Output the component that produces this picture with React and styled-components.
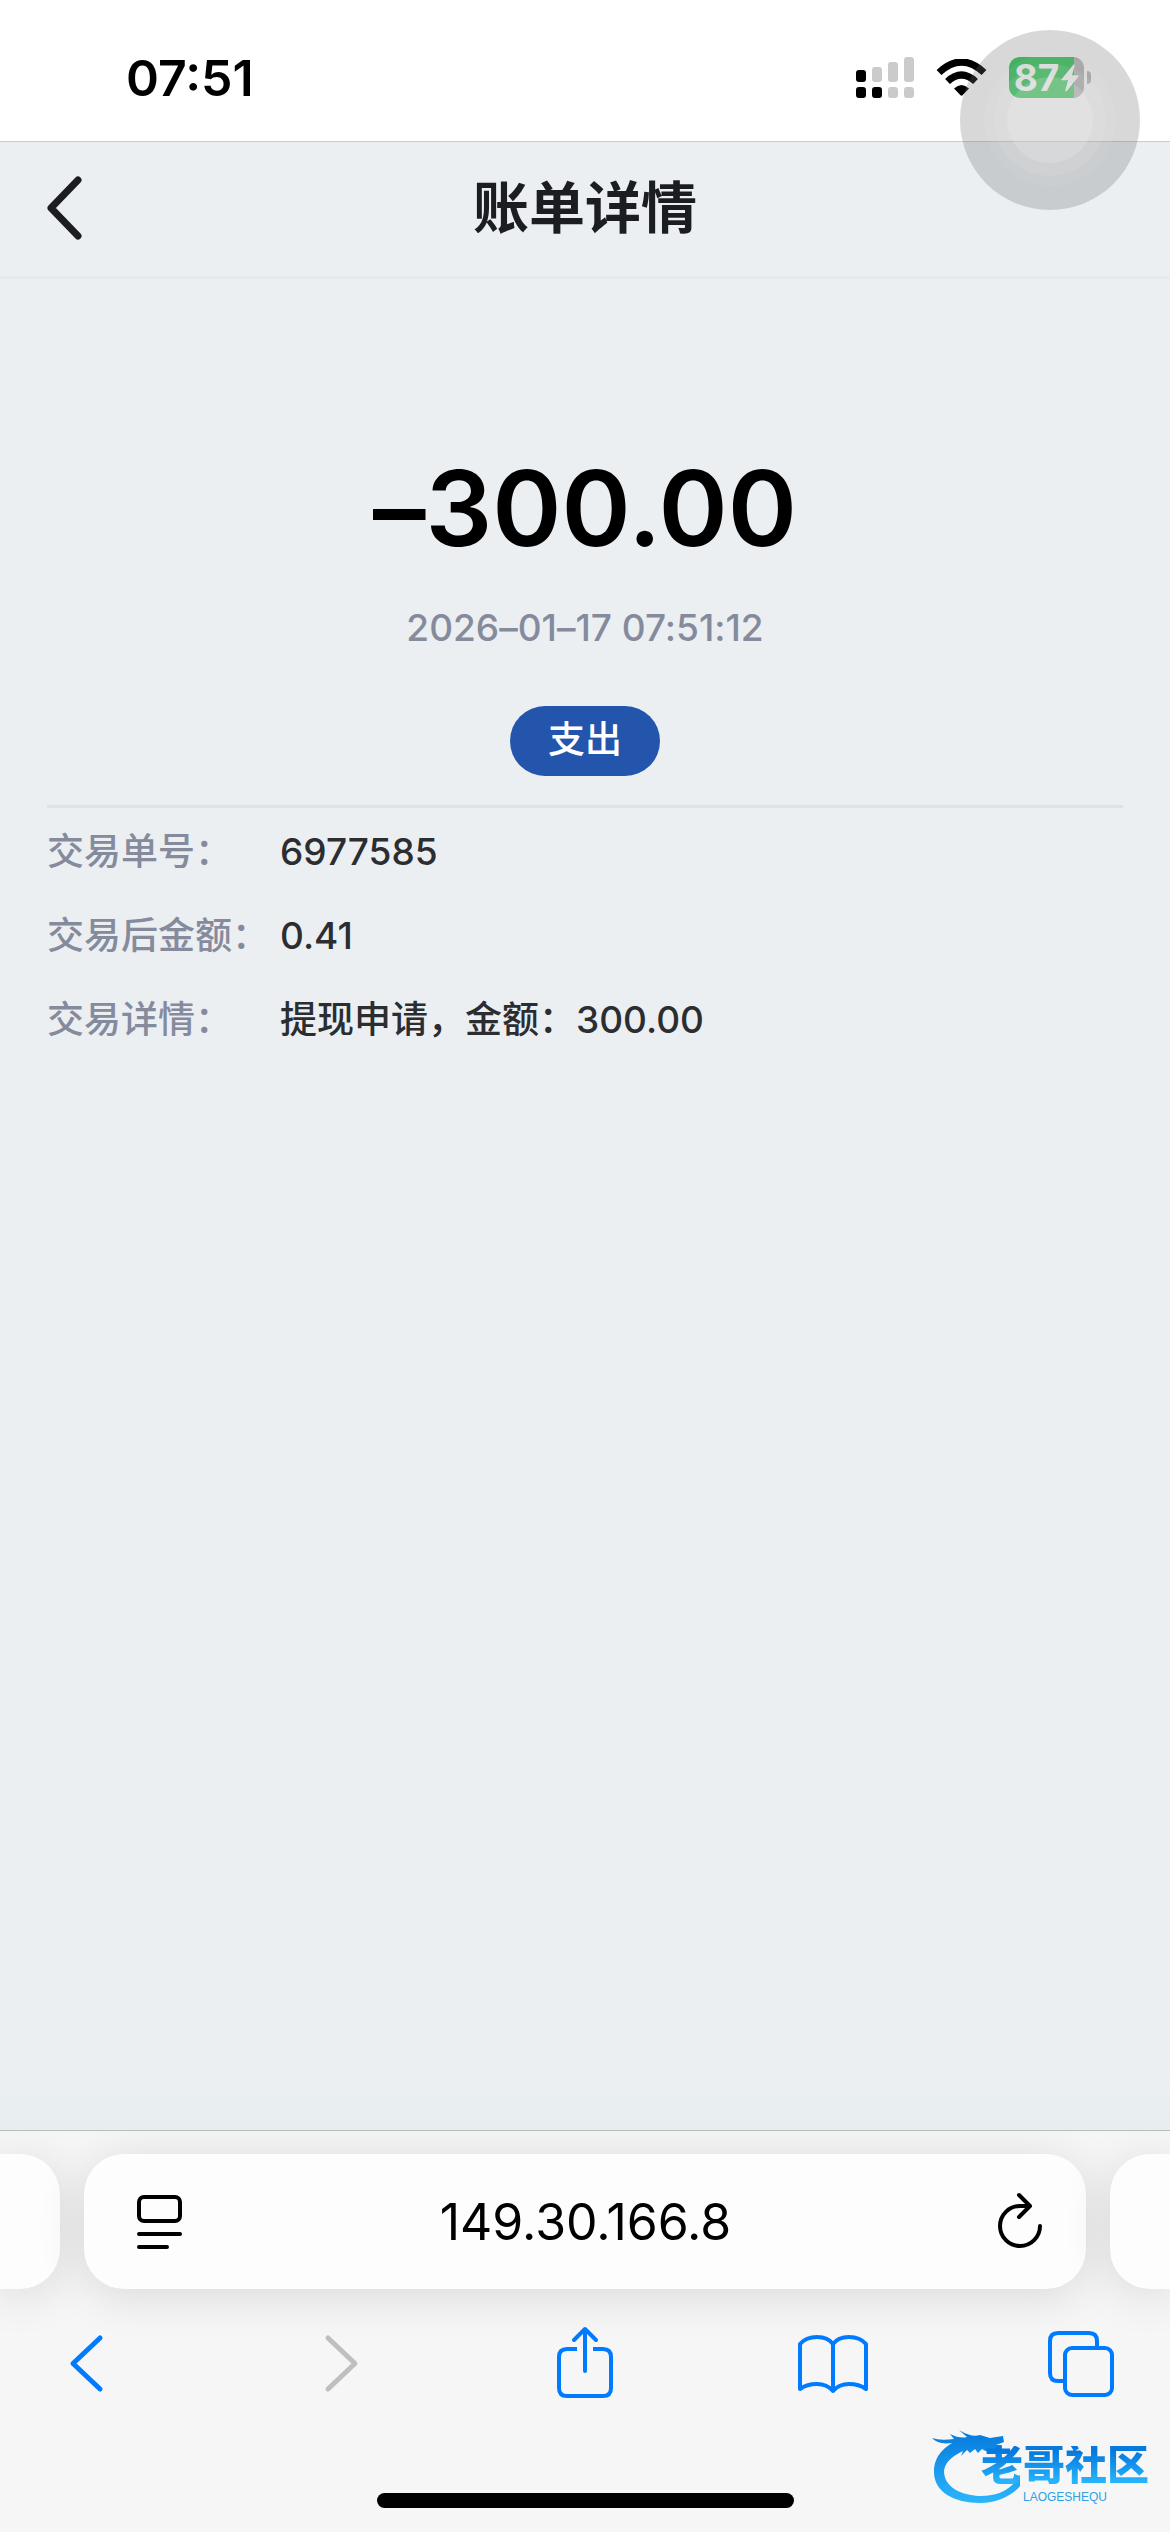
import React from "react";
import styled, { createGlobalStyle } from "styled-components";

const GlobalStyle = createGlobalStyle`
  * { box-sizing: border-box; }
  body {
    margin: 0;
    background: #ebeff2;
    font-family: Inter, "Noto Sans CJK SC", sans-serif;
    color: #000;
  }
  button, input { font: inherit; color: inherit; }
`;

const Screen = styled.div`
  position: relative;
  display: flex;
  flex-direction: column;
  min-height: 100vh;
  overflow: hidden;
`;

const StatusBar = styled.div`
  display: flex;
  align-items: center;
  justify-content: space-between;
  height: 142px;
  padding: 14px 79px 0 126px;
  background: #fff;
  border-bottom: 1px solid #c9cdcf;
`;

const Clock = styled.time`
  font-size: 50px;
  line-height: 60px;
  font-weight: 600;
`;

const StatusIcons = styled.div`
  display: flex;
  align-items: center;
  gap: 22px;
`;

const Battery = styled.div`
  display: flex;
  align-items: center;
  gap: 3px;
`;

const BatteryBody = styled.div`
  display: flex;
  align-items: center;
  justify-content: center;
  gap: 2px;
  width: 75px;
  height: 41px;
  border-radius: 11px;
  background: linear-gradient(to right, #34c759 87%, #b9b9b9 87%);
  color: #fff;
  font-size: 37px;
  line-height: 41px;
  font-weight: 700;
`;

const BatteryTip = styled.div`
  width: 4px;
  height: 13px;
  border-radius: 0 6px 6px 0;
  background: #b9b9b9;
`;

const TouchButton = styled.button`
  position: absolute;
  top: 30px;
  right: 30px;
  display: grid;
  place-items: center;
  width: 180px;
  height: 180px;
  padding: 0;
  border: 0;
  border-radius: 50%;
  background: rgba(111, 111, 111, 0.27);
`;

const TouchRing = styled.span`
  display: grid;
  place-items: center;
  width: ${(p) => p.$size}px;
  height: ${(p) => p.$size}px;
  border-radius: 50%;
  background: rgba(255, 255, 255, ${(p) => p.$light});
`;

const Header = styled.header`
  display: grid;
  grid-template-columns: 120px 1fr 120px;
  align-items: center;
  height: 137px;
  padding-bottom: 2px;
  border-bottom: 3px solid #e6e9f2;
  color: #1c1d20;
`;

const BackButton = styled.button`
  display: flex;
  width: 120px;
  padding: 0 0 0 46px;
  border: 0;
  background: none;
`;

const Title = styled.h1`
  margin: 0;
  text-align: center;
  font-size: 56px;
  line-height: 80px;
  font-weight: 600;
`;

const Content = styled.main`
  flex: 1;
  padding: 169px 47px 0;
  background: linear-gradient(to bottom, transparent calc(100% - 60px), #e8eeef);
`;

const Summary = styled.section`
  display: flex;
  flex-direction: column;
  align-items: center;
  padding-bottom: 29px;
  border-bottom: 3px solid #dae2ec;
  font-variant-ligatures: no-contextual;
`;

const Amount = styled.p`
  margin: 0;
  font-size: 105px;
  line-height: 120px;
  font-weight: 600;
`;

const DateText = styled.time`
  margin-top: 35px;
  font-size: 37px;
  line-height: 50px;
  font-weight: 500;
  color: #858b9c;
`;

const Tag = styled.span`
  margin-top: 53px;
  width: 150px;
  height: 70px;
  border-radius: 35px;
  background: #2355ad;
  color: #fff;
  text-align: center;
  font-size: 37px;
  line-height: 68px;
  font-weight: 500;
`;

const Details = styled.dl`
  display: grid;
  gap: 30px;
  margin: 0;
  padding-top: 17px;
`;

const DetailRow = styled.div`
  display: grid;
  grid-template-columns: 233px 1fr;
  font-size: 37px;
  line-height: 54px;
  font-weight: 500;
`;

const Label = styled.dt`
  color: #858b9c;
`;

const Value = styled.dd`
  margin: 0;
  color: #2c2d30;
`;

const Browser = styled.footer`
  position: relative;
  height: 402px;
  overflow: hidden;
  border-top: 1px solid #b9bebf;
  background: #f6f6f7;
`;

const TabStrip = styled.div`
  display: flex;
  gap: 24px;
  padding-top: 23px;
`;

const TabEdge = styled.div`
  width: 60px;
  height: 135px;
  border-radius: ${(p) => (p.$side === "left" ? "0 40px 40px 0" : "40px 0 0 40px")};
  background: #fdfdfd;
  box-shadow: 0 6px 48px rgba(0, 0, 0, 0.12);
`;

const AddressBar = styled.form`
  display: flex;
  flex: 1;
  align-items: center;
  justify-content: space-between;
  min-width: 0;
  height: 135px;
  padding: 0 44px 0 52px;
  border-radius: 40px;
  background: #fdfdfd;
  box-shadow: 0 6px 48px rgba(0, 0, 0, 0.12);
`;

const AddressInput = styled.input`
  flex: 1;
  min-width: 0;
  padding: 0 10px 0 0;
  border: 0;
  outline: 0;
  background: none;
  text-align: center;
  font-size: 50px;
  line-height: 60px;
`;

const IconButton = styled.button`
  display: flex;
  padding: 0;
  border: 0;
  background: none;

  svg { overflow: visible; }
`;

const Toolbar = styled.nav`
  display: flex;
  justify-content: space-between;
  padding: 35px 50px 0;
  color: #007aff;
`;

const HomeIndicator = styled.div`
  width: 417px;
  height: 15px;
  margin: 89px auto 0;
  border-radius: 8px;
  background: #000;
`;

const Watermark = styled.div`
  position: absolute;
  right: 14px;
  bottom: 22px;
  width: 224px;
  height: 84px;
`;

const WatermarkArt = styled.svg`
  position: absolute;
  left: 0;
  top: 0;
`;

const WatermarkText = styled.div`
  position: relative;
  display: flex;
  flex-direction: column;
  align-items: center;
  padding: 20px 0 0 42px;
`;

const WatermarkName = styled.span`
  font-size: 42px;
  line-height: 38px;
  font-weight: 900;
  color: transparent;
  background: linear-gradient(#0579dc 15%, #28b4fc 95%);
  background-clip: text;
`;

const WatermarkLatin = styled.span`
  margin-top: 6px;
  font-family: "Liberation Sans", sans-serif;
  font-size: 12px;
  line-height: 14px;
  color: #2e9fe8;
`;

const stroke = {
  fill: "none",
  stroke: "currentColor",
  strokeWidth: 4,
  strokeLinecap: "round",
  strokeLinejoin: "round",
};

function Signal() {
  const tops = [13, 10, 5, 0];
  return (
    <svg width="58" height="41" viewBox="0 0 58 41" aria-hidden="true">
      {tops.map((y, i) => (
        <React.Fragment key={y}>
          <rect x={i * 16} y={y} width="10" height={25 - y} rx="3" fill={i < 1 ? "#000" : "#cbcbcb"} />
          <rect x={i * 16} y="30" width="10" height="11" rx="3" fill={i < 2 ? "#000" : "#cbcbcb"} />
        </React.Fragment>
      ))}
    </svg>
  );
}

function Wifi() {
  return (
    <svg width="51" height="37" viewBox="0 0 51 37" aria-hidden="true">
      <path d="M3 13.5 Q25.500 -7.500 48 13.500" fill="none" stroke="#000" strokeWidth="7" />
      <path d="M11.500 22.500 Q25.500 9.500 39.500 22.500" fill="none" stroke="#000" strokeWidth="7" />
      <path d="M18 29.500Q25.500 22.500 33 29.500L26.500 36.300Q25.500 37.200 24.500 36.300Z" />
    </svg>
  );
}

function ToolIcon({ label, color, disabled, children }) {
  return (
    <IconButton type="button" aria-label={label} disabled={disabled}>
      <svg width="72" height="80" viewBox="0 0 72 80" {...stroke} color={color}>
        {children}
      </svg>
    </IconButton>
  );
}

const details = [
  ["交易单号：", "6977585"],
  ["交易后金额：", "0.41"],
  ["交易详情：", "提现申请，金额：300.00"],
];

export default function App() {
  return (
    <Screen>
      <GlobalStyle />
      <StatusBar>
        <Clock>07:51</Clock>
        <StatusIcons>
          <Signal />
          <Wifi />
          <Battery>
            <BatteryBody>
              87
              <svg width="18" height="28" viewBox="0 0 18 28" aria-hidden="true">
                <path d="M12.500 0.500 0.500 15.200Q0 16.300 1.200 16.300H7L4.300 26.500Q4.500 28 5.800 27L17.600 12.500Q18 11.300 16.700 11.300H11L13.800 1.500Q13.600 0 12.500 .5Z" fill="#fff" />
              </svg>
            </BatteryBody>
            <BatteryTip />
          </Battery>
        </StatusIcons>
      </StatusBar>

      <Header>
        <BackButton type="button" aria-label="返回">
          <svg width="36" height="64" viewBox="0 0 36 64" {...stroke} strokeWidth="7">
            <path d="M32 4 5 32 32 60" />
          </svg>
        </BackButton>
        <Title>账单详情</Title>
      </Header>

      <Content>
        <Summary>
          <Amount>–300.00</Amount>
          <DateText>2026–01–17 07:51:12</DateText>
          <Tag>支出</Tag>
        </Summary>
        <Details>
          {details.map(([label, value]) => (
            <DetailRow key={label}>
              <Label>{label}</Label>
              <Value>{value}</Value>
            </DetailRow>
          ))}
        </Details>
      </Content>

      <Browser>
        <TabStrip>
          <TabEdge $side="left" />
          <AddressBar onSubmit={(e) => e.preventDefault()}>
            <IconButton type="button" aria-label="页面菜单">
              <svg width="47" height="56" viewBox="0 0 47 56" {...stroke}>
                <rect x="3" y="3" width="41" height="24" rx="5" />
                <path d="M3 40H44M3 53H31" />
              </svg>
            </IconButton>
            <AddressInput type="text" aria-label="地址" defaultValue="149.30.166.8" />
            <IconButton type="submit" aria-label="重新载入">
              <svg width="44" height="56" viewBox="0 0 44 56" {...stroke}>
                <path d="M42 32A20 20 0 1 1 22 12H31M21 1 32 12 21 23" />
              </svg>
            </IconButton>
          </AddressBar>
          <TabEdge $side="right" />
        </TabStrip>
        <Toolbar>
          <ToolIcon label="后退">
            <path d="M50 14 23 39.500 50 65" strokeWidth="5" />
          </ToolIcon>
          <ToolIcon label="前进" color="#bfbfbf" disabled>
            <path d="M28 14 55 39.500 28 65" strokeWidth="5" />
          </ToolIcon>
          <ToolIcon label="分享">
            <path d="M28 25H18Q10 25 10 33V64Q10 72 18 72H54Q62 72 62 64V33Q62 25 54 25H44" strokeLinecap="butt" />
            <path d="M36 47V5M25 16 36 5 47 16" />
          </ToolIcon>
          <ToolIcon label="书签">
            <path d="M34 20Q29 13 18 13Q7 13 1 20V65Q8 60 18 60Q28 60 34 67Q40 60 50 60Q60 60 67 65V20Q61 13 50 13Q39 13 34 20V67" />
          </ToolIcon>
          <ToolIcon label="标签页">
            <path d="M17 57H10Q2 57 2 49V17Q2 9 10 9H41Q49 9 49 17V24" strokeLinecap="butt" />
            <rect x="17" y="24" width="47" height="47" rx="7" />
          </ToolIcon>
        </Toolbar>
        <HomeIndicator />
      </Browser>

      <Watermark>
        <WatermarkArt width="100" height="84" viewBox="0 0 100 84" aria-hidden="true">
          <defs>
            <linearGradient id="wave" x1="0" y1="0" x2="0" y2="1">
              <stop offset="0" stopColor="#0579dc" />
              <stop offset="1" stopColor="#2bb6fc" />
            </linearGradient>
          </defs>
          <path
            fill="url(#wave)"
            d="M0 12Q8 15 22 13L18 8Q28 13 35 11L27 4Q40 12 48 9L58 12 71 10 72 16 64 19H70L68 24 60 23 64 26Q56 27 50 23L46 27 43 23 38 27 35 24 29 30 31 25Q12 34 12 46C13 64 34 70 50 70C70 70 82 60 88 49V60C80 70 64 77 48 77C22 77 2 66 2 46C2 30 12 22 20 17Q6 19 0 12Z"
          />
        </WatermarkArt>
        <WatermarkText>
          <WatermarkName>老哥社区</WatermarkName>
          <WatermarkLatin>LAOGESHEQU</WatermarkLatin>
        </WatermarkText>
      </Watermark>

      <TouchButton type="button" aria-label="辅助触控">
        <TouchRing $size={132} $light={0.05}>
          <TouchRing $size={112} $light={0.08}>
            <TouchRing $size={86} $light={0.16} />
          </TouchRing>
        </TouchRing>
      </TouchButton>
    </Screen>
  );
}
